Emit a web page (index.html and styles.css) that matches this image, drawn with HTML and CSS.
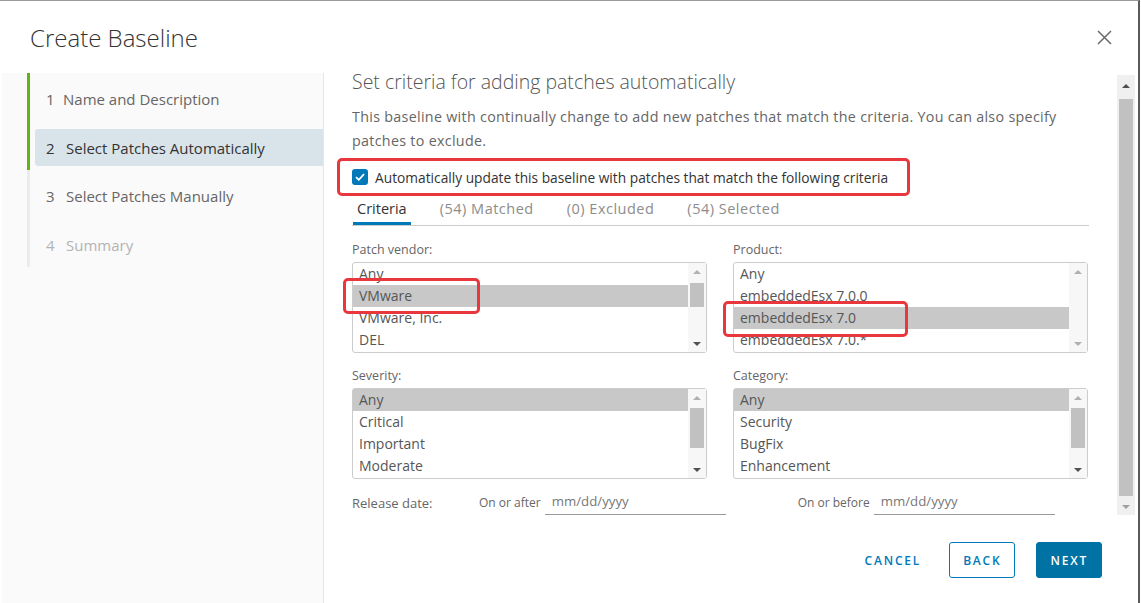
FILE: index.html
```html
<!DOCTYPE html>
<html lang="en">
<head>
<meta charset="utf-8">
<title>Create Baseline</title>
<link rel="stylesheet" href="styles.css">
</head>
<body>
<div class="modal">
  <header class="modal-header">
    <h1 class="modal-title">Create Baseline</h1>
    <button class="close" aria-label="Close">
      <svg width="15" height="15" viewBox="0 0 15 15"><path d="M1 1L14 14M14 1L1 14" stroke="#6a6a6a" stroke-width="1.5" fill="none"/></svg>
    </button>
  </header>
  <div class="modal-body">
    <nav class="steps">
      <div class="step done"><div class="step-link"><span class="num num-1">1</span>Name and Description</div></div>
      <div class="step done"><div class="step-link active"><span class="num">2</span>Select Patches Automatically</div></div>
      <div class="step"><div class="step-link"><span class="num">3</span>Select Patches Manually</div></div>
      <div class="step disabled"><div class="step-link"><span class="num">4</span>Summary</div></div>
    </nav>
    <div class="main">
      <div class="pane-row">
        <div class="pane">
          <h2 class="pane-title">Set criteria for adding patches automatically</h2>
          <p class="desc">This baseline with continually change to add new patches that match the criteria. You can also specify patches to exclude.</p>
          <div class="highlight check-row">
            <span class="checkbox"><svg width="10" height="8" viewBox="0 0 10 8"><path d="M1 4.2L3.8 6.8L9 1.2" stroke="#fff" stroke-width="1.8" fill="none"/></svg></span>
            <span class="check-label">Automatically update this baseline with patches that match the following criteria</span>
          </div>
          <div class="tabs">
            <span class="tab active">Criteria</span>
            <span class="tab">(54) Matched</span>
            <span class="tab">(0) Excluded</span>
            <span class="tab">(54) Selected</span>
          </div>
          <div class="grid">
            <div class="field">
              <div class="field-label">Patch vendor:</div>
              <div class="listbox">
                <ul class="options">
                  <li>Any</li>
                  <li class="sel">VMware</li>
                  <li>VMware, Inc.</li>
                  <li>DEL</li>
                </ul>
                <div class="lscroll">
                  <span class="arr up light"></span>
                  <span class="track"><span class="thumb thumb-vendor"></span></span>
                  <span class="arr down"></span>
                </div>
                <div class="mark mark-vendor"></div>
              </div>
            </div>
            <div class="field">
              <div class="field-label">Product:</div>
              <div class="listbox">
                <ul class="options">
                  <li>Any</li>
                  <li>embeddedEsx 7.0.0</li>
                  <li class="sel">embeddedEsx 7.0</li>
                  <li>embeddedEsx 7.0.*</li>
                </ul>
                <div class="lscroll">
                  <span class="arr up light"></span>
                  <span class="track"></span>
                  <span class="arr down light"></span>
                </div>
                <div class="mark mark-product"></div>
              </div>
            </div>
            <div class="field">
              <div class="field-label">Severity:</div>
              <div class="listbox">
                <ul class="options">
                  <li class="sel">Any</li>
                  <li>Critical</li>
                  <li>Important</li>
                  <li>Moderate</li>
                </ul>
                <div class="lscroll">
                  <span class="arr up light"></span>
                  <span class="track"><span class="thumb thumb-tall"></span></span>
                  <span class="arr down"></span>
                </div>
              </div>
            </div>
            <div class="field">
              <div class="field-label">Category:</div>
              <div class="listbox">
                <ul class="options">
                  <li class="sel">Any</li>
                  <li>Security</li>
                  <li>BugFix</li>
                  <li>Enhancement</li>
                </ul>
                <div class="lscroll">
                  <span class="arr up light"></span>
                  <span class="track"><span class="thumb thumb-tall"></span></span>
                  <span class="arr down"></span>
                </div>
              </div>
            </div>
          </div>
          <div class="date-row">
            <span class="date-label">Release date:</span>
            <span class="date-sub">On or after</span>
            <span class="date-input">mm/dd/yyyy</span>
            <span class="date-sub before">On or before</span>
            <span class="date-input">mm/dd/yyyy</span>
          </div>
        </div>
        <div class="vscroll">
          <span class="varr up"></span>
          <span class="vtrack"><span class="vthumb"></span></span>
          <span class="varr down"></span>
        </div>
      </div>
      <footer class="footer">
        <button class="btn btn-link">Cancel</button>
        <button class="btn btn-outline">Back</button>
        <button class="btn btn-primary">Next</button>
      </footer>
    </div>
  </div>
</div>
</body>
</html>
```

FILE: styles.css
```css
* { box-sizing: border-box; }

html, body {
  margin: 0;
  padding: 0;
  background: #fff;
}

body {
  width: 1141px;
  height: 603px;
  overflow: hidden;
  font-family: "Open Sans", "Noto Sans", sans-serif;
  color: #565656;
}

.modal {
  width: 1140px;
  height: 603px;
  border-top: 1px solid #9a9a9a;
  border-right: 2px solid #5a5a5a;
  display: flex;
  flex-direction: column;
}

.modal-header {
  height: 70px;
  display: flex;
  align-items: center;
  justify-content: space-between;
  padding: 2px 26px 0 30px;
}

.modal-title {
  margin: 0;
  font-size: 24px;
  font-weight: 300;
  color: #333;
}

.close {
  border: 0;
  background: none;
  padding: 0;
  width: 15px;
  height: 15px;
  display: flex;
}

.modal-body {
  flex: 1;
  display: flex;
  min-height: 0;
}

/* sidebar steps */
.steps {
  width: 322px;
  margin: 2px 0 0 2px;
  background: #fafafa;
  border-right: 1px solid #e6e6e6;
  padding-left: 25px;
}

.step {
  height: 48.5px;
  padding: 7.5px 0 0 5px;
  border-left: 3px solid #ebebeb;
}

.step.done { border-left-color: #60b515; }

.step-link {
  height: 37px;
  display: flex;
  align-items: center;
  padding-left: 11px;
  font-size: 15px;
  color: #666;
  border-radius: 3px 0 0 3px;
}

.step-link.active {
  background: #d9e4ea;
  color: #333;
}

.step.disabled .step-link { color: #b3b3b3; }

.num {
  display: inline-block;
  width: 20px;
}

.num-1 { width: 17px; }

/* main column */
.main {
  flex: 1;
  display: flex;
  flex-direction: column;
  min-width: 0;
}

.pane-row {
  height: 444px;
  display: flex;
}

.pane {
  flex: 1;
  padding-left: 28px;
  padding-right: 28px;
}

.pane-title {
  margin: -1px 0 0;
  font-size: 19.5px;
  line-height: 24px;
  font-weight: 300;
  color: #565656;
}

.desc {
  margin: 11px 0 0;
  max-width: 725px;
  font-size: 14.3px;
  letter-spacing: 0.3px;
  line-height: 24px;
  color: #666;
}

.highlight {
  border: 3px solid #e8383d;
  border-radius: 5px;
}

.check-row {
  margin-top: 5px;
  margin-left: -15px;
  width: 573px;
  height: 38px;
  display: flex;
  align-items: center;
  padding-left: 12px;
  gap: 7px;
}

.checkbox {
  width: 16px;
  height: 16px;
  border-radius: 3px;
  background: #0079b8;
  display: flex;
  align-items: center;
  justify-content: center;
}

.check-label {
  font-size: 13.75px;
  color: #333;
}

.tabs {
  display: flex;
  gap: 25px;
  height: 30px;
  border-bottom: 1px solid #ccc;
  padding-left: 1px;
}

.tab {
  padding: 3px 4px 0;
  font-size: 14.5px;
  letter-spacing: 0.5px;
  line-height: 20px;
  color: #8c8c8c;
}

.tab.active {
  color: #333;
  letter-spacing: 0;
  box-shadow: inset 0 -3px 0 #0079b8;
}

.grid {
  margin-top: 16px;
  display: grid;
  grid-template-columns: 355px 355px;
  column-gap: 26px;
  row-gap: 15px;
}

.field-label {
  font-size: 12.5px;
  line-height: 16px;
  color: #666;
  margin-bottom: 4px;
}

.listbox {
  position: relative;
  height: 91px;
  border: 1px solid #ccc;
  border-radius: 3px;
  display: flex;
  background: #fff;
}

.options {
  list-style: none;
  margin: 0;
  padding: 0;
  flex: 1;
  overflow: hidden;
}

.options li {
  height: 22px;
  line-height: 22px;
  padding-left: 6px;
  font-size: 14px;
  color: #565656;
  white-space: nowrap;
}

.options li.sel { background: #c8c8c8; }

.lscroll {
  width: 18px;
  display: flex;
  flex-direction: column;
  background: #f7f7f7;
}

.arr {
  height: 17px;
  display: flex;
  align-items: center;
  justify-content: center;
}

.arr::before {
  content: "";
  border-left: 4px solid transparent;
  border-right: 4px solid transparent;
}

.arr.up::before { border-bottom: 4px solid #505050; }
.arr.down::before { border-top: 4px solid #505050; }
.arr.up.light::before { border-bottom-color: #b0b0b0; }
.arr.down.light::before { border-top-color: #b0b0b0; }

.track {
  flex: 1;
  padding: 0 2px;
}

.thumb {
  display: block;
  background: #c1c1c1;
}

.thumb-vendor { margin-top: 3px; height: 24px; }
.thumb-tall { margin-top: 2px; height: 40px; }

.mark {
  position: absolute;
  border: 3px solid #e8383d;
  border-radius: 5px;
  height: 36px;
}

.mark-vendor { left: -10px; top: 15px; width: 137px; }
.mark-product { left: -11px; top: 38px; width: 185px; }

.date-row {
  margin-top: 11px;
  display: flex;
  align-items: center;
  height: 25px;
  font-size: 12px;
  color: #666;
}

.date-label { width: 127px; font-size: 13px; }

.date-sub { margin-right: 4px; }
.date-sub.before { margin-left: 72px; }

.date-input {
  width: 181px;
  height: 25px;
  line-height: 23px;
  padding-left: 7px;
  border-bottom: 1px solid #9a9a9a;
  font-size: 13.25px;
  color: #777;
}

/* main vertical scrollbar */
.vscroll {
  width: 18px;
  margin: 4px 3px 0 0;
  background: #f0f0f0;
  display: flex;
  flex-direction: column;
}

.varr {
  display: flex;
  align-items: center;
  justify-content: center;
}

.varr.up { height: 21px; }
.varr.down { height: 17px; }

.varr::before {
  content: "";
  border-left: 4px solid transparent;
  border-right: 4px solid transparent;
}

.varr.up::before { border-bottom: 4px solid #505050; }
.varr.down::before { border-top: 4px solid #a0a0a0; }

.vtrack {
  flex: 1;
  padding: 3px 2px 2px;
  display: flex;
}

.vthumb {
  flex: 1;
  background: #c1c1c1;
}

/* footer */
.footer {
  flex: 1;
  display: flex;
  justify-content: flex-end;
  align-items: flex-start;
  padding: 27px 36px 0 0;
}

.btn {
  height: 36px;
  font-family: inherit;
  font-size: 12px;
  font-weight: 600;
  letter-spacing: 0.15em;
  text-transform: uppercase;
  border-radius: 3px;
  padding: 0 13px;
  cursor: pointer;
}

.btn-link {
  border: 1px solid transparent;
  background: none;
  color: #0079b8;
  margin-right: 14px;
}

.btn-outline {
  border: 1px solid #0079b8;
  background: #fff;
  color: #0079b8;
  margin-right: 21px;
}

.btn-primary {
  border: 1px solid #0072a3;
  background: #0072a3;
  color: #fff;
}
```
